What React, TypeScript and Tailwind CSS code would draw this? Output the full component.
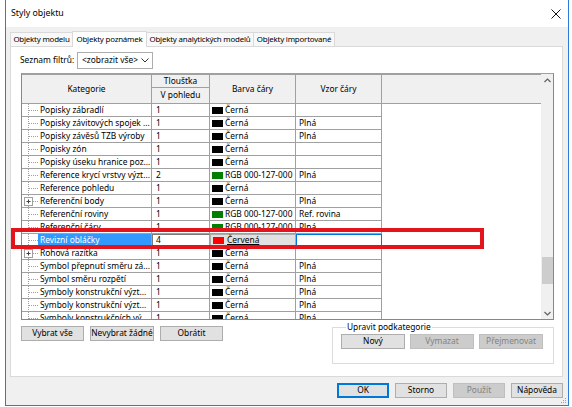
import React from 'react';

type Row = {
  name: string;
  weight: string;
  color: string;
  colorName: string;
  pattern: string;
  expand?: boolean;
  selected?: boolean;
};

const BLACK = '#000000';
const GREEN = '#007f00';
const RGB = 'RGB 000-127-000';

const rows: Row[] = [
  { name: 'Popisky zábradlí', weight: '1', color: BLACK, colorName: 'Černá', pattern: '' },
  { name: 'Popisky závitových spojek ...', weight: '1', color: BLACK, colorName: 'Černá', pattern: 'Plná' },
  { name: 'Popisky závěsů TZB výroby', weight: '1', color: BLACK, colorName: 'Černá', pattern: 'Plná' },
  { name: 'Popisky zón', weight: '1', color: BLACK, colorName: 'Černá', pattern: '' },
  { name: 'Popisky úseku hranice poz...', weight: '1', color: BLACK, colorName: 'Černá', pattern: '' },
  { name: 'Reference krycí vrstvy výzt...', weight: '2', color: GREEN, colorName: RGB, pattern: 'Plná' },
  { name: 'Reference pohledu', weight: '1', color: BLACK, colorName: 'Černá', pattern: '' },
  { name: 'Referenční body', weight: '1', color: BLACK, colorName: 'Černá', pattern: 'Plná', expand: true },
  { name: 'Referenční roviny', weight: '1', color: GREEN, colorName: RGB, pattern: 'Ref. rovina' },
  { name: 'Referenční čáry', weight: '1', color: GREEN, colorName: RGB, pattern: 'Plná' },
  { name: 'Revizní obláčky', weight: '4', color: '#ff0000', colorName: 'Červená', pattern: '', selected: true },
  { name: 'Rohová razítka', weight: '1', color: BLACK, colorName: 'Černá', pattern: '', expand: true },
  { name: 'Symbol přepnutí směru zá...', weight: '1', color: BLACK, colorName: 'Černá', pattern: 'Plná' },
  { name: 'Symbol směru rozpětí', weight: '1', color: BLACK, colorName: 'Černá', pattern: 'Plná' },
  { name: 'Symboly konstrukční výzt...', weight: '1', color: BLACK, colorName: 'Černá', pattern: 'Plná' },
  { name: 'Symboly konstrukční výzt...', weight: '1', color: BLACK, colorName: 'Černá', pattern: 'Plná' },
  { name: 'Symboly konstrukčních vý...', weight: '1', color: BLACK, colorName: 'Černá', pattern: 'Plná' },
];

const cols = 'grid grid-cols-[130px_58px_86px_86px_159px]';

const Tree: React.FC<{ expand?: boolean }> = ({ expand }) => (
  <svg width="16" height="13" className="shrink-0">
    {expand ? (
      <>
        <line x1="6.5" y1="0" x2="6.5" y2="2" stroke="#a0a0a0" strokeDasharray="1 1" />
        <line x1="6.5" y1="11" x2="6.5" y2="13" stroke="#a0a0a0" strokeDasharray="1 1" />
        <rect x="2.5" y="2.5" width="8" height="8" fill="#fff" stroke="#a0a0a0" />
        <line x1="4.5" y1="6.5" x2="8.5" y2="6.5" stroke="#404040" />
        <line x1="6.5" y1="4.5" x2="6.5" y2="8.5" stroke="#404040" />
        <line x1="11" y1="6.5" x2="16" y2="6.5" stroke="#a0a0a0" strokeDasharray="1 1" />
      </>
    ) : (
      <>
        <line x1="6.5" y1="0" x2="6.5" y2="13" stroke="#a0a0a0" strokeDasharray="1 1" />
        <line x1="7" y1="6.5" x2="16" y2="6.5" stroke="#a0a0a0" strokeDasharray="1 1" />
      </>
    )}
  </svg>
);

const Swatch: React.FC<{ color: string }> = ({ color }) => (
  <span className="w-[11px] h-[7px] shrink-0" style={{ backgroundColor: color }} />
);

const Btn: React.FC<{ label: string; w: string; disabled?: boolean; primary?: boolean }> = ({ label, w, disabled, primary }) => (
  <div
    className={`${w} h-[15px] shrink-0 flex items-center justify-center whitespace-nowrap border ${
      disabled
        ? 'bg-[#cccccc] border-[#bfbfbf] text-[#838383]'
        : primary
        ? 'bg-[#e1e1e1] border-[#0078d7] shadow-[inset_0_0_0_1px_#0078d7]'
        : 'bg-[#e1e1e1] border-[#adadad]'
    }`}
  >
    {label}
  </div>
);

const Chevron: React.FC<{ up?: boolean }> = ({ up }) => (
  <svg width="7" height="5" viewBox="0 0 7 5">
    <path d={up ? 'M0.5 4 L3.5 1 L6.5 4' : 'M0.5 1 L3.5 4 L6.5 1'} fill="none" stroke="#606060" strokeWidth="1.2" />
  </svg>
);

const tab =
  'h-[14px] bg-[#f8f8f8] border-t border-[#d9d9d9] flex items-center justify-center whitespace-nowrap text-[7.9px] tracking-[-0.2px]';

export default function App() {
  return (
    <div className="relative w-[572px] h-[407px] bg-white overflow-hidden font-['Noto_Sans',sans-serif] text-[8.4px] text-black leading-none">
      <div className="ml-[5px] w-[564px] h-[406px] border-x border-b border-[#2b7bd8] flex flex-col">
        {/* title bar */}
        <div className="h-[27px] shrink-0 bg-white flex items-center pl-[5px] pr-[7px]">
          <span className="text-[8.8px]">Styly objektu</span>
          <svg width="10" height="10" className="ml-auto">
            <path d="M0.5 0.5 L9.5 9.5 M9.5 0.5 L0.5 9.5" stroke="#111" strokeWidth="1" />
          </svg>
        </div>

        <div className="flex-1 bg-[#f0f0f0] pl-[4px] pr-[5px] pt-[4px] flex flex-col">
          {/* tabs */}
          <div className="flex items-end h-[15px] relative z-10">
            <div className={`w-[62px] border-l ${tab}`}>Objekty modelu</div>
            <div className="w-[75px] h-[16px] -mb-px bg-white border-t border-x border-[#d9d9d9] flex items-center justify-center whitespace-nowrap text-[7.9px] tracking-[-0.2px]">
              Objekty poznámek
            </div>
            <div className={`w-[106px] ${tab}`}>Objekty analytických modelů</div>
            <div className={`w-[82px] border-x ${tab}`}>Objekty importované</div>
          </div>

          {/* panel */}
          <div className="h-[331px] shrink-0 bg-white border border-[#d9d9d9] flex flex-col pl-[9px]">
            <div className="flex items-center mt-[5px] h-[17px]">
              <span className="w-[57px] whitespace-nowrap">Seznam filtrů:</span>
              <div className="w-[76px] h-[17px] border border-[#adadad] bg-white flex items-center pl-[4px] pr-[3px]">
                <span className="whitespace-nowrap">&lt;zobrazit vše&gt;</span>
                <svg width="8" height="5" viewBox="0 0 8 5" className="ml-auto">
                  <path d="M0.5 0.5 L4 4 L7.5 0.5" fill="none" stroke="#333" strokeWidth="1" />
                </svg>
              </div>
            </div>

            {/* table */}
            <div className="mt-[4px] ml-[1px] w-[533px] h-[247px] border border-[#828790] border-t-[#a0a0a0] flex">
              <div className="w-[519px] flex flex-col overflow-hidden">
                {/* header */}
                <div className={`${cols} h-[30px] shrink-0 bg-[#f0f0f0] border-t border-[#a0a0a0] border-b`}>
                  <div className="border-r border-[#a0a0a0] flex items-center justify-center">Kategorie</div>
                  <div className="border-r border-[#a0a0a0] flex flex-col">
                    <div className="h-[13px] border-b border-[#a0a0a0] flex items-start justify-center pt-[2px] overflow-hidden">Tloušťka</div>
                    <div className="flex-1 flex items-center justify-center">V pohledu</div>
                  </div>
                  <div className="border-r border-[#a0a0a0] flex items-center justify-center">Barva čáry</div>
                  <div className="border-r border-[#a0a0a0] flex items-center justify-center">Vzor čáry</div>
                  <div />
                </div>
                {/* rows */}
                <div className="flex-1 overflow-hidden bg-white">
                  {rows.map((r, i) => (
                    <div key={i} className={`${cols} h-[13px]`}>
                      <div className="flex border-r border-b border-[#a0a0a0] overflow-hidden">
                        <Tree expand={r.expand} />
                        <div
                          className={`flex-1 flex items-center pl-[2px] whitespace-nowrap overflow-hidden ${
                            r.selected ? 'bg-[#3399ff] text-white' : ''
                          }`}
                        >
                          {r.name}
                        </div>
                      </div>
                      {r.selected ? (
                        <>
                          <div className="flex items-center pl-[3px] border border-[#7a7a7a] border-r-[#a0a0a0]">{r.weight}</div>
                          <div className="flex items-center gap-[3px] pl-[2px] bg-[#e1e1e1] border border-[#adadad]">
                            <Swatch color={r.color} />
                            <span className="underline">{r.colorName}</span>
                          </div>
                          <div className="border border-[#0078d7] bg-white" />
                        </>
                      ) : (
                        <>
                          <div className="flex items-center pl-[4px] border-r border-b border-[#a0a0a0]">{r.weight}</div>
                          <div className="flex items-center gap-[2px] pl-[2px] border-r border-b border-[#a0a0a0] whitespace-nowrap overflow-hidden">
                            <Swatch color={r.color} />
                            <span>{r.colorName}</span>
                          </div>
                          <div className="flex items-center pl-[3px] border-r border-b border-[#a0a0a0] whitespace-nowrap">{r.pattern}</div>
                        </>
                      )}
                      <div />
                    </div>
                  ))}
                </div>
              </div>
              {/* scrollbar */}
              <div className="w-[12px] bg-[#f0f0f0] flex flex-col items-center">
                <div className="h-[12px] flex items-center justify-center"><Chevron up /></div>
                <div className="mt-[171px] w-[11px] h-[27px] bg-[#cdcdcd]" />
                <div className="mt-auto h-[12px] flex items-center justify-center"><Chevron /></div>
              </div>
            </div>

            {/* lower controls */}
            <div className="flex mt-[6px] pr-[8px]">
              <div className="flex ml-[1px] gap-[6px] h-[15px]">
                <Btn label="Vybrat vše" w="w-[63px]" />
                <Btn label="Nevybrat žádné" w="w-[64px]" />
                <Btn label="Obrátit" w="w-[63px]" />
              </div>
              <fieldset className="ml-auto mt-[-4px] w-[222px] h-[42px] border border-[#dcdcdc] pl-[8px] pt-[2px]">
                <legend className="ml-[5px] px-[1px] leading-[10px] whitespace-nowrap">Upravit podkategorie</legend>
                <div className="flex gap-[5px]">
                  <Btn label="Nový" w="w-[64px]" />
                  <Btn label="Vymazat" w="w-[64px]" disabled />
                  <Btn label="Přejmenovat" w="w-[64px]" disabled />
                </div>
              </fieldset>
            </div>
          </div>

          {/* dialog buttons */}
          <div className="flex justify-end gap-[6px] mt-[6px]">
            <Btn label="OK" w="w-[52px]" primary />
            <Btn label="Storno" w="w-[52px]" />
            <Btn label="Použít" w="w-[52px]" disabled />
            <Btn label="Nápověda" w="w-[52px]" />
          </div>
        </div>
      </div>

      {/* size grip */}
      <svg width="6" height="6" className="absolute left-[561px] top-[398px]">
        <rect x="4" y="0" width="1" height="1" fill="#a0a0a0" />
        <rect x="2" y="2" width="1" height="1" fill="#a0a0a0" />
        <rect x="4" y="2" width="1" height="1" fill="#a0a0a0" />
        <rect x="0" y="4" width="1" height="1" fill="#a0a0a0" />
        <rect x="2" y="4" width="1" height="1" fill="#a0a0a0" />
        <rect x="4" y="4" width="1" height="1" fill="#a0a0a0" />
      </svg>

      {/* red annotation frame */}
      <div className="absolute left-[11px] top-[228px] w-[473px] h-[21px] border-[4px] border-[#e3141c]" />
    </div>
  );
}
